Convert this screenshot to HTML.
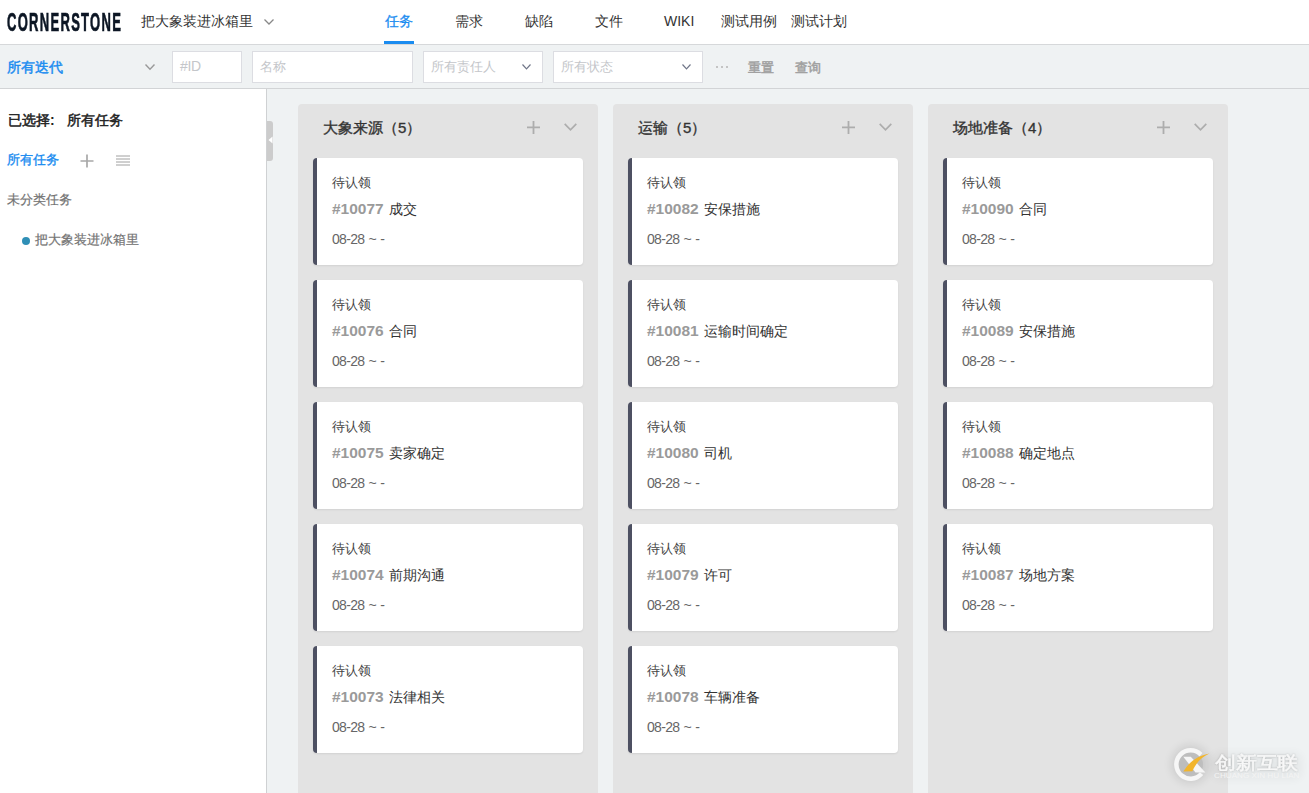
<!DOCTYPE html>
<html><head><meta charset="utf-8">
<style>
*{box-sizing:border-box;margin:0;padding:0}
html,body{width:1309px;height:793px;overflow:hidden;background:#fff;font-family:"Liberation Sans",sans-serif;color:#333}
.abs{position:absolute}
#nav{position:absolute;left:0;top:0;width:1309px;height:44px;background:#fff}
#logo{position:absolute;left:7px;top:7px;font-size:26px;line-height:30px;font-weight:bold;color:#0c1624;-webkit-text-stroke:0.7px #0c1624;transform-origin:0 0;transform:scaleX(0.5);white-space:nowrap;letter-spacing:2.6px}
.nt{position:absolute;top:12px;font-size:14px;line-height:18px;color:#333;white-space:nowrap}
#filter{position:absolute;left:0;top:44px;width:1309px;height:45px;background:#eff2f3;border-top:1px solid #d6d8da;border-bottom:1px solid #d2d4d6}
.inp{position:absolute;top:6px;height:32px;background:#fff;border:1px solid #dcdde2}
.ph{position:absolute;top:6px;font-size:13px;line-height:18px;color:#c4c6ca;white-space:nowrap}
#side{position:absolute;left:0;top:89px;width:267px;height:704px;background:#fff;border-right:1px solid #cfd1d3}
#main{position:absolute;left:267px;top:89px;width:1042px;height:704px;background:#eff2f3}
.col{position:absolute;top:15px;width:300px;height:700px;background:#e3e3e3;border-radius:4px}
.ch{position:absolute;left:25px;top:15px;font-size:15px;font-weight:normal;-webkit-text-stroke:0.35px #333;line-height:18px;color:#333;white-space:nowrap}
.card{position:absolute;left:15px;width:270px;height:107px;background:#fff;border-radius:4px;border-left:4px solid #4d5062;box-shadow:0 1px 2px rgba(0,0,0,0.08)}
.st{position:absolute;left:15px;top:16px;font-size:13px;line-height:18px;color:#444;white-space:nowrap}
.tt{position:absolute;left:15px;top:42px;font-size:14px;line-height:18px;color:#333;white-space:nowrap}
.tt b{color:#9a9a9a;font-size:15.5px;font-weight:bold;margin-right:1.5px;-webkit-text-stroke:0}
.dt{position:absolute;left:15px;top:72px;font-size:14px;letter-spacing:-0.7px;word-spacing:1px;line-height:18px;color:#666;white-space:nowrap}
svg{position:absolute;overflow:visible}
</style></head><body>

<div id="nav">
  <div id="logo">CORNERSTONE</div>
  <div class="nt" style="left:141px">把大象装进冰箱里</div>
  <svg style="left:264px;top:19px" width="10" height="6" viewBox="0 0 10 6"><path d="M0.5 0.5 L5 5 L9.5 0.5" fill="none" stroke="#888" stroke-width="1.3"/></svg>
  <div class="nt" style="left:385px;color:#1a8cf0;-webkit-text-stroke:0.3px #1a8cf0">任务</div>
  <div style="position:absolute;left:384px;top:41px;width:30px;height:3px;background:#1a8cf0"></div>
  <div class="nt" style="left:455px">需求</div>
  <div class="nt" style="left:525px">缺陷</div>
  <div class="nt" style="left:595px">文件</div>
  <div class="nt" style="left:664px">WIKI</div>
  <div class="nt" style="left:721px">测试用例</div>
  <div class="nt" style="left:791px">测试计划</div>
</div>

<div id="filter">
  <div class="ph" style="left:7px;top:13px;font-size:14px;color:#1a8cf0;font-weight:normal;-webkit-text-stroke:0.45px #1a8cf0">所有迭代</div>
  <svg style="left:145px;top:19px" width="10" height="6" viewBox="0 0 10 6"><path d="M0.5 0.5 L5 5.2 L9.5 0.5" fill="none" stroke="#999" stroke-width="1.4"/></svg>
  <div class="inp" style="left:172px;width:70px"><div class="ph" style="left:7px;top:5px;font-size:14px;letter-spacing:-0.3px">#ID</div></div>
  <div class="inp" style="left:252px;width:161px"><div class="ph" style="left:7px">名称</div></div>
  <div class="inp" style="left:423px;width:120px"><div class="ph" style="left:7px">所有责任人</div>
    <svg style="left:98px;top:12px" width="9" height="6" viewBox="0 0 9 6"><path d="M0.5 0.5 L4.5 5 L8.5 0.5" fill="none" stroke="#707688" stroke-width="1.15"/></svg></div>
  <div class="inp" style="left:553px;width:150px"><div class="ph" style="left:7px">所有状态</div>
    <svg style="left:128px;top:12px" width="9" height="6" viewBox="0 0 9 6"><path d="M0.5 0.5 L4.5 5 L8.5 0.5" fill="none" stroke="#707688" stroke-width="1.15"/></svg></div>
  <div class="abs" style="left:716px;top:21px;width:2px;height:2px;background:#c4c4c4"></div>
  <div class="abs" style="left:721px;top:21px;width:2px;height:2px;background:#c4c4c4"></div>
  <div class="abs" style="left:726px;top:21px;width:2px;height:2px;background:#c4c4c4"></div>
  <div class="ph" style="left:748px;top:14px;font-size:13px;color:#a0a0a0;font-weight:normal;-webkit-text-stroke:0.5px #a0a0a0">重置</div>
  <div class="ph" style="left:795px;top:14px;font-size:13px;color:#a0a0a0;font-weight:normal;-webkit-text-stroke:0.5px #a0a0a0">查询</div>
</div>

<div id="side">
  <div class="abs" style="left:8px;top:22px;font-size:14px;font-weight:normal;-webkit-text-stroke:0.5px #222;line-height:18px;color:#222;white-space:nowrap">已选择</div>
  <div class="abs" style="left:50px;top:22px;font-size:14px;font-weight:bold;line-height:18px;color:#222;white-space:nowrap">:</div>
  <div class="abs" style="left:67px;top:22px;font-size:14px;font-weight:normal;-webkit-text-stroke:0.5px #222;line-height:18px;color:#222;white-space:nowrap">所有任务</div>
  <div class="abs" style="left:7px;top:62px;font-size:13px;line-height:18px;color:#1a8cf0;-webkit-text-stroke:0.35px #1a8cf0;white-space:nowrap">所有任务</div>
  <svg style="left:80px;top:65px" width="14" height="14" viewBox="0 0 14 14"><path d="M7 0.5 V13.5 M0.5 7 H13.5" fill="none" stroke="#a8a8a8" stroke-width="1.7"/></svg>
  <svg style="left:116px;top:66px" width="14" height="11" viewBox="0 0 14 11"><path d="M0 1 H14 M0 4 H14 M0 7 H14 M0 10 H14" fill="none" stroke="#a0a0a0" stroke-width="1"/></svg>
  <div class="abs" style="left:7px;top:102px;font-size:13px;line-height:18px;color:#737373;-webkit-text-stroke:0.2px #737373;white-space:nowrap">未分类任务</div>
  <div class="abs" style="left:22px;top:148px;width:8px;height:8px;border-radius:50%;background:#2f8fb6"></div>
  <div class="abs" style="left:35px;top:142px;font-size:13px;line-height:18px;color:#737373;-webkit-text-stroke:0.2px #737373;white-space:nowrap">把大象装进冰箱里</div>
</div>

<div id="main">
  <div class="abs" style="left:0;top:32px;width:6px;height:40px;background:#cccccc;border-radius:0 3px 3px 0"></div>
  <svg style="left:1px;top:47px" width="5" height="8" viewBox="0 0 5 8"><path d="M0.5 4 L4.5 0.5 V7.5 Z" fill="#fff"/></svg>

  <div class="col" style="left:31px">
    <div class="ch">大象来源（5）</div>
    <svg style="left:229.2px;top:17px" width="13" height="13" viewBox="0 0 13 13"><path d="M6.5 0 V13 M0 6.3 H13" fill="none" stroke="#adadad" stroke-width="1.8"/></svg>
    <svg style="left:265.5px;top:19px" width="13" height="8" viewBox="0 0 13 8"><path d="M0.7 0.8 L6.5 6.8 L12.3 0.8" fill="none" stroke="#adadad" stroke-width="1.7"/></svg>
    <div class="card" style="top:54px"><div class="st">待认领</div><div class="tt"><b>#10077</b> 成交</div><div class="dt">08-28 ~ -</div></div>
    <div class="card" style="top:176px"><div class="st">待认领</div><div class="tt"><b>#10076</b> 合同</div><div class="dt">08-28 ~ -</div></div>
    <div class="card" style="top:298px"><div class="st">待认领</div><div class="tt"><b>#10075</b> 卖家确定</div><div class="dt">08-28 ~ -</div></div>
    <div class="card" style="top:420px"><div class="st">待认领</div><div class="tt"><b>#10074</b> 前期沟通</div><div class="dt">08-28 ~ -</div></div>
    <div class="card" style="top:542px"><div class="st">待认领</div><div class="tt"><b>#10073</b> 法律相关</div><div class="dt">08-28 ~ -</div></div>
  </div>

  <div class="col" style="left:346px">
    <div class="ch">运输（5）</div>
    <svg style="left:229.2px;top:17px" width="13" height="13" viewBox="0 0 13 13"><path d="M6.5 0 V13 M0 6.3 H13" fill="none" stroke="#adadad" stroke-width="1.8"/></svg>
    <svg style="left:265.5px;top:19px" width="13" height="8" viewBox="0 0 13 8"><path d="M0.7 0.8 L6.5 6.8 L12.3 0.8" fill="none" stroke="#adadad" stroke-width="1.7"/></svg>
    <div class="card" style="top:54px"><div class="st">待认领</div><div class="tt"><b>#10082</b> 安保措施</div><div class="dt">08-28 ~ -</div></div>
    <div class="card" style="top:176px"><div class="st">待认领</div><div class="tt"><b>#10081</b> 运输时间确定</div><div class="dt">08-28 ~ -</div></div>
    <div class="card" style="top:298px"><div class="st">待认领</div><div class="tt"><b>#10080</b> 司机</div><div class="dt">08-28 ~ -</div></div>
    <div class="card" style="top:420px"><div class="st">待认领</div><div class="tt"><b>#10079</b> 许可</div><div class="dt">08-28 ~ -</div></div>
    <div class="card" style="top:542px"><div class="st">待认领</div><div class="tt"><b>#10078</b> 车辆准备</div><div class="dt">08-28 ~ -</div></div>
  </div>

  <div class="col" style="left:661px">
    <div class="ch">场地准备（4）</div>
    <svg style="left:229.2px;top:17px" width="13" height="13" viewBox="0 0 13 13"><path d="M6.5 0 V13 M0 6.3 H13" fill="none" stroke="#adadad" stroke-width="1.8"/></svg>
    <svg style="left:265.5px;top:19px" width="13" height="8" viewBox="0 0 13 8"><path d="M0.7 0.8 L6.5 6.8 L12.3 0.8" fill="none" stroke="#adadad" stroke-width="1.7"/></svg>
    <div class="card" style="top:54px"><div class="st">待认领</div><div class="tt"><b>#10090</b> 合同</div><div class="dt">08-28 ~ -</div></div>
    <div class="card" style="top:176px"><div class="st">待认领</div><div class="tt"><b>#10089</b> 安保措施</div><div class="dt">08-28 ~ -</div></div>
    <div class="card" style="top:298px"><div class="st">待认领</div><div class="tt"><b>#10088</b> 确定地点</div><div class="dt">08-28 ~ -</div></div>
    <div class="card" style="top:420px"><div class="st">待认领</div><div class="tt"><b>#10087</b> 场地方案</div><div class="dt">08-28 ~ -</div></div>
  </div>
</div>

<svg style="left:1150px;top:725px" width="159" height="68" viewBox="1150 725 159 68">
  <defs>
    <filter id="bl" x="-50%" y="-50%" width="200%" height="200%"><feGaussianBlur stdDeviation="5"/></filter>
    <filter id="bl2" x="-20%" y="-50%" width="140%" height="200%"><feGaussianBlur stdDeviation="4"/></filter>
    <filter id="ts" x="-10%" y="-50%" width="120%" height="200%"><feGaussianBlur in="SourceAlpha" stdDeviation="1.2"/><feComponentTransfer><feFuncA type="linear" slope="0.25"/></feComponentTransfer><feMerge><feMergeNode/><feMergeNode in="SourceGraphic"/></feMerge></filter>
  </defs>
  <circle cx="1190.6" cy="764.5" r="19" fill="#000" opacity="0.10" filter="url(#bl)"/>
  <rect x="1212" y="752" width="90" height="28" rx="8" fill="#000" opacity="0.035" filter="url(#bl2)"/>
  <circle cx="1190.6" cy="764.5" r="12.5" fill="#000" opacity="0.065"/>
  <path d="M1202.47 753.03 A16.5 16.5 0 1 0 1203.24 775.11 L1199.79 772.22 A12 12 0 1 1 1199.52 756.47 Z" fill="#f6f6f6"/>
  <path d="M1183.3 756.7 L1190.8 756.7 L1205.4 772.5 L1195.5 772.5 Z" fill="#f6f6f6"/>
  <path d="M1183.4 771.6 C1187.5 764 1196 756 1209.4 753.5 C1200 758 1195.5 764 1192.4 771.2 Z" fill="#f2b52c"/>
  <text x="1214.5" y="769.3" font-size="18" textLength="84" lengthAdjust="spacingAndGlyphs" fill="#f8f8f8" stroke="#f8f8f8" stroke-width="0.3" filter="url(#ts)" font-family="Liberation Sans, sans-serif">创新互联</text>
  <text x="1214" y="778.2" font-size="6.3" textLength="85.5" lengthAdjust="spacingAndGlyphs" fill="#f4f4f4" font-family="Liberation Sans, sans-serif">CHUANG XIN HU LIAN</text>
</svg>
</body></html>
